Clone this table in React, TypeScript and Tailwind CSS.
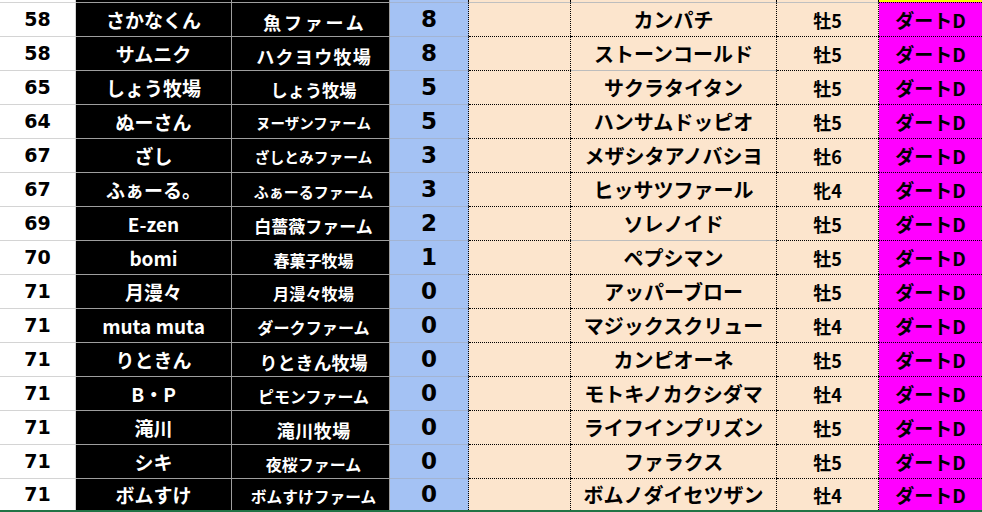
// [rank, name, farm, farm text width in px, points, horse, sex/age]
const rows: [string, string, string, number, string, string, string][] = [
  ["58", "さかなくん", "魚ファーム", 104, "8", "カンパチ", "牡5"],
  ["58", "サムニク", "ハクヨウ牧場", 116, "8", "ストーンコールド", "牡5"],
  ["65", "しょう牧場", "しょう牧場", 86, "5", "サクラタイタン", "牡5"],
  ["64", "ぬーさん", "ヌーザンファーム", 116, "5", "ハンサムドッピオ", "牡5"],
  ["67", "ざし", "ざしとみファーム", 118, "3", "メザシタアノバシヨ", "牡6"],
  ["67", "ふぁーる。", "ふぁーるファーム", 120, "3", "ヒッサツファール", "牝4"],
  ["69", "E-zen", "白薔薇ファーム", 119, "2", "ソレノイド", "牡5"],
  ["70", "bomi", "春菓子牧場", 80, "1", "ペプシマン", "牡5"],
  ["71", "月漫々", "月漫々牧場", 81, "0", "アッパーブロー", "牡5"],
  ["71", "muta muta", "ダークファーム", 113, "0", "マジックスクリュー", "牡4"],
  ["71", "りときん", "りときん牧場", 108, "0", "カンピオーネ", "牡5"],
  ["71", "B・P", "ピモンファーム", 112, "0", "モトキノカクシダマ", "牡4"],
  ["71", "滝川", "滝川牧場", 74, "0", "ライフインプリズン", "牡5"],
  ["71", "シキ", "夜桜ファーム", 96, "0", "ファラクス", "牡5"],
  ["71", "ボムすけ", "ボムすけファーム", 126, "0", "ボムノダイセツザン", "牡4"],
];

// rows whose top edge in the horse-name column is a plain gridline, not dotted
const plainTop = new Set([0, 2, 7]);

const grid =
  "grid grid-cols-[76px_156px_158px_79px_102px_206px_102px_103px]";

function farmStyle(text: string, width: number) {
  const n = [...text].length;
  const size = Math.min(18, width / n);
  const spacing = Math.max(0, (width - size * n) / n);
  return { fontSize: size, letterSpacing: spacing, paddingLeft: 6 + spacing };
}

export default function App() {
  return (
    <div className="h-[512px] w-[982px] overflow-hidden bg-white font-['Noto_Sans_CJK_JP','Noto_Sans',sans-serif] font-bold">
      {/* tail of the row above */}
      <div className={`${grid} h-[2px]`}>
        <div className="border-r border-[#d4d4d4] bg-white" />
        <div className="border-r border-[#9e9e9e] bg-black" />
        <div className="border-r border-[#9e9e9e] bg-black" />
        <div className="border-r border-dotted border-black bg-[#a4c2f4]" />
        <div className="border-r border-dotted border-black bg-[#fce5cd]" />
        <div className="border-r border-dotted border-black bg-[#fce5cd]" />
        <div className="border-r border-dotted border-black bg-[#fce5cd]" />
        <div className="bg-[#ffff00]" />
      </div>

      {rows.map(([rank, name, farm, farmW, pts, horse, sex], i) => (
        <div
          key={i}
          className={`${grid} ${i === rows.length - 1 ? "h-[32px]" : "h-[34px]"} leading-none`}
        >
          <div className="flex items-center justify-center border-t border-r border-[#d4d4d4] bg-white pb-px font-['DejaVu_Sans',sans-serif] text-[19px] text-black">
            {rank}
          </div>
          <div className="flex items-center justify-center border-t border-r border-[#9e9e9e] bg-black text-[19px] text-white">
            {name}
          </div>
          <div
            className="flex items-center justify-center whitespace-nowrap border-t border-r border-[#9e9e9e] bg-black pt-1 text-white"
            style={farmStyle(farm, farmW)}
          >
            {farm}
          </div>
          <div className="flex items-center justify-center border-t border-r border-t-[#a3b4d2] border-r-black border-dotted [border-top-style:solid] bg-[#a4c2f4] pb-px font-['DejaVu_Sans',sans-serif] text-[23px] text-black">
            {pts}
          </div>
          <div
            className={`border-t border-r border-dotted border-black bg-[#fce5cd] ${
              i === 0 ? "[border-top-style:solid] border-t-[#c0c0c0]" : ""
            }`}
          />
          <div
            className={`flex items-center justify-center border-t border-r border-dotted border-black bg-[#fce5cd] text-[20px] text-black ${
              plainTop.has(i) ? "[border-top-style:solid] border-t-[#bdbdbd]" : ""
            }`}
          >
            {horse}
          </div>
          <div
            className={`flex items-center justify-center border-t border-r border-dotted border-black bg-[#fce5cd] text-[18px] text-black ${
              i === 0 ? "[border-top-style:solid] border-t-[#c0c0c0]" : ""
            }`}
          >
            {sex}
          </div>
          <div className="flex items-center justify-center border-t border-dotted border-black bg-[#ff00ff] text-[19px] text-black">
            ダートD
          </div>
        </div>
      ))}
      <div className="h-[2px] bg-[#217346]" />
    </div>
  );
}
